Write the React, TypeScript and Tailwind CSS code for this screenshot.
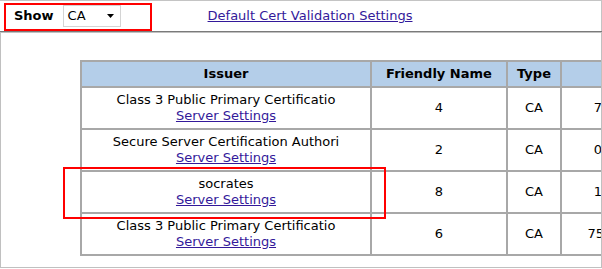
import React from "react";

const rows = [
  { issuer: "Class 3 Public Primary Certificatio", fn: "4", type: "CA", extra: "70 21 35 66" },
  { issuer: "Secure Server Certification Authori", fn: "2", type: "CA", extra: "04 63 55 18" },
  { issuer: "socrates", fn: "8", type: "CA", extra: "15 86 02 47" },
  { issuer: "Class 3 Public Primary Certificatio", fn: "6", type: "CA", extra: "75 09 61 33 8" },
];

export default function App() {
  return (
    <div className="relative w-[602px] h-[269px] bg-white overflow-hidden font-['DejaVu_Sans',Verdana,sans-serif] text-[13px] leading-[16px] text-black">
      <div className="flex items-center h-[31px] border-t border-r border-[#c4c4c4]">
        <span className="ml-[14px] font-bold">Show</span>
        <div className="ml-[9px] w-[58px] h-[22px] border border-[#d4d4d4] bg-white flex items-center justify-between pl-[4px] pr-[3px]">
          <span>CA</span>
          <svg width="8" height="5" viewBox="0 0 8 5" className="mr-[2px]">
            <polygon points="0,0 7,0 3.5,4" fill="#000" />
          </svg>
        </div>
        <a href="#" className="ml-[87px] underline text-[#33199a]">
          Default Cert Validation Settings
        </a>
      </div>
      <div className="h-px bg-[#7a7a7a]" />
      <div className="h-[236px] border-t border-l border-r border-b border-[#c0c0c0] overflow-hidden pt-[27px] pl-[79px]">
        <table className="table-fixed border-separate border-spacing-0 border border-[#a8a8a8] w-[626px]">
          <thead>
            <tr className="bg-[#b4cee9]">
              <th className="w-[290px] border border-[#a8a8a8] py-[4px] font-bold text-center">Issuer</th>
              <th className="w-[136px] border border-[#a8a8a8] py-[4px] font-bold text-center">Friendly Name</th>
              <th className="w-[54px] border border-[#a8a8a8] py-[4px] font-bold text-center">Type</th>
              <th className="w-[144px] border border-[#a8a8a8] py-[4px] font-bold text-center">Serial</th>
            </tr>
          </thead>
          <tbody>
            {rows.map((r, i) => (
              <tr key={i}>
                <td className="border border-[#a8a8a8] py-[4px] text-center whitespace-nowrap overflow-hidden">
                  <div>{r.issuer}</div>
                  <a href="#" className="underline text-[#33199a]">Server Settings</a>
                </td>
                <td className="border border-[#a8a8a8] py-[4px] text-center">{r.fn}</td>
                <td className="border border-[#a8a8a8] py-[4px] text-center">{r.type}</td>
                <td className="border border-[#a8a8a8] py-[4px] text-center whitespace-nowrap">{r.extra}</td>
              </tr>
            ))}
          </tbody>
        </table>
      </div>
      <div className="absolute left-[4px] top-[3px] w-[148px] h-[28px] border-2 border-[#ff0000]" />
      <div className="absolute left-[63px] top-[167px] w-[323px] h-[52px] border-2 border-[#ff0000]" />
    </div>
  );
}
